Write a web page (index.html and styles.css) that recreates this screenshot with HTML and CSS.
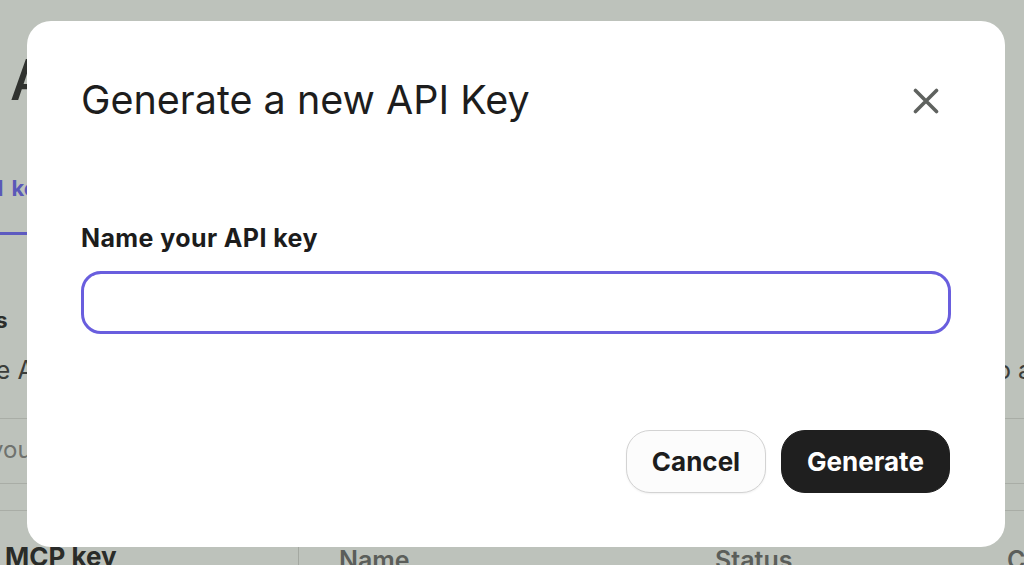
FILE: index.html
```html
<!DOCTYPE html>
<html lang="en">
<head>
<meta charset="utf-8">
<title>Generate a new API Key</title>
<link rel="stylesheet" href="styles.css">
</head>
<body>
<div class="page" aria-hidden="true">
  <h1 class="page-title">API keys</h1>
  <nav class="tabs">
    <span class="tab active">All keys</span>
  </nav>
  <section class="section">
    <div class="section-row">
      <h3 class="section-title">Your API keys</h3>
    </div>
    <div class="section-row desc">
      <p class="section-desc">Use API keys to authenticate requests.</p>
      <p class="section-desc right">to access</p>
    </div>
    <div class="rule"></div>
    <p class="muted">you</p>
    <div class="rule"></div>
    <div class="rule second"></div>
    <div class="table">
      <div class="side">MCP key</div>
      <div class="cols">
        <span class="col-name">Name</span>
        <span class="col-status">Status</span>
        <span class="col-created">Created</span>
      </div>
    </div>
  </section>
</div>

<div class="modal" role="dialog" aria-labelledby="modal-title">
  <div class="modal-header">
    <h2 id="modal-title" class="modal-title">Generate a new API Key</h2>
    <button class="close-btn" aria-label="Close">
      <svg width="26" height="26" viewBox="0 0 26 26" fill="none" stroke="#5f625f" stroke-width="3.6" stroke-linecap="round">
        <path d="M2.5 2.5 L23.5 23.5 M23.5 2.5 L2.5 23.5"/>
      </svg>
    </button>
  </div>
  <div class="field">
    <label class="field-label" for="keyname">Name your API key</label>
    <input id="keyname" class="field-input" type="text">
  </div>
  <div class="actions">
    <button class="btn btn-secondary">Cancel</button>
    <button class="btn btn-primary">Generate</button>
  </div>
</div>
</body>
</html>
```

FILE: styles.css
```css
* { box-sizing: border-box; }

html, body {
  margin: 0;
  padding: 0;
}

body {
  width: 1024px;
  height: 565px;
  overflow: hidden;
  background: #bdc2bb;
  font-family: Inter, "Noto Sans", "Liberation Sans", sans-serif;
  color: #1c1c1c;
}

/* ---------- background page (dimmed) ---------- */
.page {
  width: 1024px;
  padding-top: 52px;
  overflow: hidden;
}

.page-title {
  margin: 0;
  padding-left: 10px;
  font-size: 56px;
  line-height: 1;
  font-weight: 500;
  color: #30322f;
  letter-spacing: -0.5px;
}

.tabs {
  margin-top: 66px;
  display: flex;
}

.tab {
  font-size: 22px;
  font-weight: 700;
  line-height: 28px;
  color: #5a58b8;
  padding-bottom: 30px;
  margin-left: -25px;
  border-bottom: 3px solid #5d5ac0;
  white-space: nowrap;
  word-spacing: 3px;
}

.section {
  padding-top: 71px;
}

.section-title {
  margin: 0;
  font-size: 22px;
  font-weight: 700;
  line-height: 28px;
  color: #2c2e2b;
  margin-left: -140px;
  white-space: nowrap;
}

.section-row.desc {
  display: flex;
  margin-top: 20px;
}

.section-desc {
  margin: 0;
  font-size: 25px;
  line-height: 32px;
  color: #3b3d3a;
  white-space: nowrap;
}

.section-desc:first-child {
  flex: 0 0 1024px;
  margin-left: -36px;
}

.section-desc.right {
  flex: 0 0 auto;
}

.rule {
  height: 1px;
  background: #a9ada6;
  margin-top: 32px;
}

.muted + .rule {
  margin-top: 18px;
}

.rule.second {
  margin-top: 26px;
}

.muted {
  margin: 16px 0 0 -10px;
  font-size: 24px;
  line-height: 30px;
  color: #6f726e;
}

.table {
  display: flex;
  height: 60px;
}

.side {
  flex: 0 0 299px;
  border-right: 1px solid #a4a8a1;
  padding: 30px 0 0 5px;
  font-size: 26px;
  font-weight: 700;
  color: #2a2c29;
  white-space: nowrap;
}

.cols {
  flex: 1;
  display: flex;
  padding: 34px 0 0 40px;
  font-size: 25px;
  font-weight: 600;
  color: #5b5e5a;
  white-space: nowrap;
}

.col-name { flex: 0 0 376px; }
.col-status { flex: 0 0 292px; }

/* ---------- modal ---------- */
.modal {
  position: fixed;
  left: 27px;
  top: 21px;
  width: 978px;
  height: 526px;
  padding: 54px 54px 54px 54px;
  background: #ffffff;
  border-radius: 24px;
  display: flex;
  flex-direction: column;
}

.modal-header {
  display: flex;
  justify-content: space-between;
  align-items: flex-start;
}

.modal-title {
  margin: 0;
  font-size: 39.5px;
  line-height: 50px;
  font-weight: 400;
  color: #1d1d1d;
  letter-spacing: 0;
}

.close-btn {
  margin: 13px 12px 0 0;
  padding: 0;
  width: 26px;
  height: 26px;
  border: 0;
  background: none;
  display: flex;
  cursor: pointer;
}

.field {
  margin-top: 98px;
  display: flex;
  flex-direction: column;
}

.field-label {
  font-size: 25px;
  line-height: 30px;
  font-weight: 700;
  color: #1c1c1c;
  margin-bottom: 18px;
  letter-spacing: 0.4px;
}

.field-input {
  height: 63px;
  width: 100%;
  border: 3px solid #695ede;
  border-radius: 20px;
  outline: none;
  padding: 0 20px;
  font-size: 20px;
  font-family: inherit;
  background: #fff;
}

.actions {
  margin-top: auto;
  display: flex;
  justify-content: flex-end;
  gap: 15px;
  padding-right: 1px;
}

.btn {
  height: 63px;
  border-radius: 24px;
  font-family: inherit;
  font-size: 26px;
  font-weight: 700;
  cursor: pointer;
  padding: 0;
}

.btn-secondary {
  width: 140px;
  background: #fcfcfc;
  border: 1px solid #d3d3d3;
  color: #1d1d1d;
  box-shadow: 0 1px 2px rgba(0,0,0,0.06);
}

.btn-primary {
  width: 169px;
  background: #1f1f1f;
  border: 1px solid #1f1f1f;
  color: #ffffff;
}
```
